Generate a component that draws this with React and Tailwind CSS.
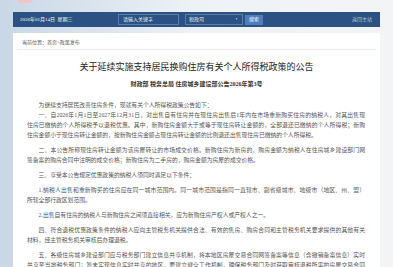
import React from "react";

// each paragraph is given as its lines, so the wrap matches the page.
// "full" = the last line is a full line too and gets justified.
const paragraphs = [
  {
    lines: [
      "一、自2026年1月1日至2027年12月31日，对出售自有住房并在现住房出售后1年内在市场重新购买住房的纳税人，对其出售现",
      "住房已缴纳的个人所得税予以退税优惠。其中，新购住房金额大于或等于现住房转让金额的，全部退还已缴纳的个人所得税；新购",
      "住房金额小于现住房转让金额的，按新购住房金额占现住房转让金额的比例退还出售现住房已缴纳的个人所得税。",
    ],
  },
  {
    lines: [
      "二、本公告所称现住房转让金额为该房屋转让的市场成交价格。新购住房为新房的，购房金额为纳税人在住房城乡建设部门网",
      "签备案的购房合同中注明的成交价格；新购住房为二手房的，购房金额为房屋的成交价格。",
    ],
  },
  { lines: ["三、享受本公告规定优惠政策的纳税人须同时满足以下条件："] },
  {
    lines: [
      "1.纳税人出售和重新购买的住房应在同一城市范围内。同一城市范围是指同一直辖市、副省级城市、地级市（地区、州、盟）",
      "所辖全部行政区划范围。",
    ],
  },
  { lines: ["2.出售自有住房的纳税人与新购住房之间须直接相关，应为新购住房产权人或产权人之一。"] },
  {
    lines: [
      "四、符合退税优惠政策条件的纳税人应向主管税务机关提供合法、有效的售房、购房合同和主管税务机关要求提供的其他有关",
      "材料，经主管税务机关审核后办理退税。",
    ],
  },
  {
    lines: [
      "五、各级住房城乡建设部门应与税务部门建立信息共享机制，将本地区房屋交易合同网签备案等信息（含撤销备案信息）实时",
      "共享至当地税务部门；暂未实现信息实时共享的地区，要建立健全工作机制，确保税务部门及时获取审核退税所需的房屋交易合同",
    ],
    full: true,
  },
];

function Paragraph({ lines, full = false, className = "" }) {
  return (
    <div className={className}>
      {lines.map((line, i) => {
        const justify = i < lines.length - 1 || full;
        return (
          <div
            key={i}
            className={`${i === 0 ? "pl-[2em]" : ""} ${
              justify ? "text-justify [text-align-last:justify]" : ""
            }`}
          >
            {line}
          </div>
        );
      })}
    </div>
  );
}

function App() {
  return (
    <div
      className="h-[267px] overflow-hidden bg-gradient-to-r from-[#c9d7e6] via-[#eef2f6] to-[#f3f4f6] px-[13px]"
      style={{ fontFamily: '"Liberation Serif", "Noto Sans CJK SC", serif' }}
    >
      {/* top logo strip */}
      <div className="h-[12px] pl-[5px]">
        <div className="w-[14px] h-[3px] bg-[#f3c3c6] rounded-b-sm" />
      </div>

      {/* header bar */}
      <div className="h-[15px] bg-[#2b5282] flex items-center pl-[7px] pr-[8px] text-[5px] text-white">
        <span className="w-[98px]">2026年01月14日&nbsp;&nbsp;星期三</span>
        <div className="w-[61px] h-[11px] border border-[#5a7ea9] flex items-center pl-[4px] text-[#e6edf5]">
          请输入关键字
        </div>
        <div className="ml-[6px] w-[58px] h-[11px] border border-[#5a7ea9] flex items-center justify-between pl-[3px] pr-[4px] text-[#e6edf5]">
          <span>税政司</span>
          <span className="text-[3px] text-[#b8c8da]">▼</span>
        </div>
        <div className="ml-[2px] w-[18px] h-[10px] bg-[#4b7fc0] flex items-center justify-center">
          搜索
        </div>
        <span className="ml-auto text-[#b9c7d8]">返回主站</span>
      </div>

      {/* content panel */}
      <div className="mt-[6px] bg-white h-[300px] pt-[5px]">
        <div className="mx-[4px] pl-[5px] border-b border-[#ececec] leading-[10px] pb-[1px] text-[5px] text-[#555]">
          当前位置：首页&gt;政策发布
        </div>
        <h1 className="mt-[11px] text-center text-[9px] leading-[12px] text-[#222]">
          关于延续实施支持居民换购住房有关个人所得税政策的公告
        </h1>
        <p className="mt-[7px] text-center text-[6px] leading-[8px] font-bold text-[#333]">
          财政部 税务总局 住房城乡建设部公告2026年第3号
        </p>
        <div className="mt-[12px] ml-[14px] w-[338px] text-[5.8px] leading-[10px] text-[#555]">
          <Paragraph lines={["为继续支持居民改善住房条件，现就有关个人所得税政策公告如下："]} />
          {paragraphs.map((p, i) => (
            <Paragraph
              key={i}
              lines={p.lines}
              full={p.full}
              className={i === 0 ? "" : "mt-[5px]"}
            />
          ))}
        </div>
      </div>
    </div>
  );
}

export default App;
